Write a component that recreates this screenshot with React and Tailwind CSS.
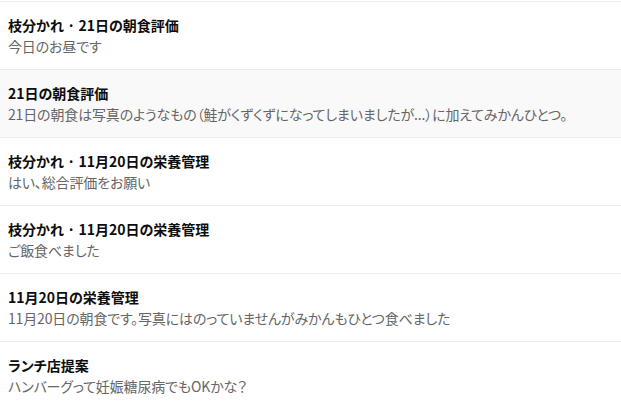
const items = [
    { title: "枝分かれ · 21日の朝食評価", preview: "今日のお昼です" },
    {
        title: "21日の朝食評価",
        preview: "21日の朝食は写真のようなもの（鮭がくずくずになってしまいましたが...）に加えてみかんひとつ。",
        active: true,
    },
    { title: "枝分かれ · 11月20日の栄養管理", preview: "はい、総合評価をお願い" },
    { title: "枝分かれ · 11月20日の栄養管理", preview: "ご飯食べました" },
    { title: "11月20日の栄養管理", preview: "11月20日の朝食です。写真にはのっていませんがみかんもひとつ食べました" },
    { title: "ランチ店提案", preview: "ハンバーグって妊娠糖尿病でもOKかな？" },
];

const App = () => {
    return (
        <div className="h-[401px] w-[621px] overflow-hidden bg-white pt-px font-['Noto_Sans_CJK_JP','Noto_Sans',sans-serif] [font-feature-settings:'palt']">
            {items.map((item, i) => (
                <div
                    key={i}
                    className={`flex flex-col gap-px border-t border-[#ececec] px-2 py-[13px] ${item.active ? "bg-[#f9f9f9]" : "bg-white"}`}
                >
                    <p className="truncate text-sm font-bold leading-5 text-[#0d0d0d]">
                        {item.title}
                    </p>
                    <p className="truncate text-sm leading-5 tracking-[-0.15px] text-[#666666]">
                        {item.preview}
                    </p>
                </div>
            ))}
        </div>
    );
};

export default App;
